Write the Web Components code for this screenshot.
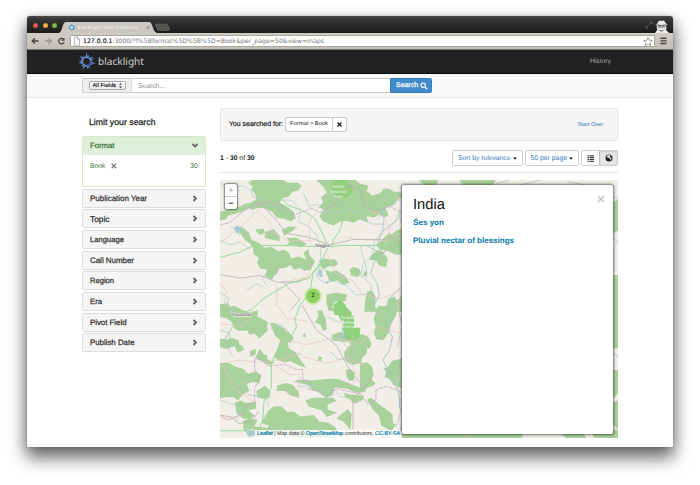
<!DOCTYPE html>
<html lang="en">
<head>
<meta charset="utf-8">
<title>Blacklight Search Results</title>
<style>
html,body{margin:0;height:100%;background:#fff;overflow:hidden}
body{font-family:"Liberation Sans",Arial,sans-serif;font-size:7.4px;color:#333;text-rendering:geometricPrecision}
</style>
</head>
<body>
<browser-window>
  <tab-strip slot="chrome" label="Blacklight Search Results"></tab-strip>
  <address-bar slot="chrome"></address-bar>
  <site-nav></site-nav>
  <search-bar></search-bar>
  <page-columns>
    <facet-list slot="side">
      <facet-panel open label="Format" w="24.5" value="Book" count="30"></facet-panel>
      <facet-panel label="Publication Year" w="57"></facet-panel>
      <facet-panel label="Topic" w="19.5"></facet-panel>
      <facet-panel label="Language" w="34"></facet-panel>
      <facet-panel label="Call Number" w="44"></facet-panel>
      <facet-panel label="Region" w="24"></facet-panel>
      <facet-panel label="Era" w="12"></facet-panel>
      <facet-panel label="Pivot Field" w="36.5"></facet-panel>
      <facet-panel label="Publish Date" w="44.5"></facet-panel>
    </facet-list>
    <applied-params></applied-params>
    <result-tools></result-tools>
    <map-view>
      <result-popup heading="India">
        <fit-text w="31">Śes yon</fit-text>
        <fit-text w="101">Pluvial nectar of blessings</fit-text>
      </result-popup>
    </map-view>
  </page-columns>
</browser-window>
<script>
const define = (name, html, setup) => {
  customElements.define(name, class extends HTMLElement {
    constructor() {
      super();
      this.attachShadow({mode: 'open'}).innerHTML = (typeof html === 'function') ? html(this) : html;
    }
    connectedCallback() { if (setup) setup(this); }
  });
};

define('browser-window', `<style>
:host{display:block;box-sizing:border-box;margin:16px 0 0 27px;width:646px;height:431px;background:#fff;border-radius:3px 3px 1px 1px;
box-shadow:0 0 1px 0 rgba(0,0,0,.65),0 10px 17px 1px rgba(0,0,0,.55),0 3px 14px rgba(0,0,0,.2)}
.in{height:431px;overflow:hidden;border-radius:3px 3px 1px 1px}
</style><div class="in"><slot name="chrome"></slot><slot></slot></div>`);

define('tab-strip', el => `<style>
:host{display:flex;height:17px;background:linear-gradient(#4b4b4b,#353535 20%,#222 80%,#1a1a1a);align-items:flex-end;box-sizing:border-box}
.lights{display:flex;gap:4.4px;padding:0 0 4.8px 6.2px;width:29px;box-sizing:content-box}
i{width:5px;height:5px;border-radius:50%;box-shadow:inset 0 0 1px #0008}
.tab{position:relative;width:99px;height:12px}
.tab svg{display:block}
.t{position:absolute;left:15px;top:2px;font:bold 5.6px/8px "Noto Sans",sans-serif;color:#f4f3f0;text-shadow:0 0 1px #999}
.sp{flex:1}.r{display:block}
</style>
<div class="lights"><i style="background:#e95b54"></i><i style="background:#f4b53d"></i><i style="background:#78c250"></i></div>
<div class="tab"><svg width="112" height="12" viewBox="0 0 112 12" overflow="visible">
<path d="M-3 12C1 10 0 1 4 1H87C91 1 90 10 95 12Z" fill="#cbc8c1"/>
<path d="M94 3h10q1.500 0 2.200 2l1.500 3q.5 1.500-1.500 1.500h-9q-1.500 0-2-1.500l-1.700-4q-.2-1 .5-1Z" fill="#55534f" stroke="#777" stroke-width=".5"/>
<circle cx="9.800" cy="6.500" r="2.100" fill="#e8eef5" stroke="#4e8dd0" stroke-width="1.800" stroke-dasharray="1.500 .4"/>
<path d="M84.500 5l3 3m0-3l-3 3" stroke="#777" stroke-width=".8"/></svg>
<span class="t"><fit-text w="61">${el.getAttribute('label')}</fit-text></span></div>
<div class="sp"></div>
<svg class="r" width="30" height="15" viewBox="0 0 30 15"><path d="M3 10l2.500-2.500M6.500 6.500l2-2M3 8v2h2M7 4h2v2" stroke="#666" fill="none" stroke-width=".8"/>
<path d="M12.500 7l2-1.800L15.500 3q1.500-1 3 0 1.500-1 3 0l1.200 2.200 2 1.300-2 1.500 1 2-1 1.500L26 15H12l2.500-3.500-1-2 .8-1.500Z" fill="#e9e9e9"/><path d="M13.500 6.900q5 1.300 10.500 0M15.200 9.100q2-.8 3.300.2 1.500-1 3.500-.1M16.500 12.300l2 .8 2-.8" fill="none" stroke="#444" stroke-width=".9"/></svg>`);

define('address-bar', `<style>
:host{display:flex;box-sizing:border-box;height:17px;padding:2.500px 4px 2.500px 0;background:linear-gradient(#cfccc6,#c3bfb7);border-bottom:1px solid #77746e;align-items:center}
.nav{width:43px;height:12px;flex:none}
.url{flex:1;height:11.500px;background:#fff;border:.5px solid #aaa69e;border-radius:1px;display:flex;align-items:center;box-sizing:border-box}
.u{font:7px/11px "DejaVu Sans",sans-serif;color:#777;flex:1;padding-left:2px}
b{font-weight:400;color:#111;-webkit-text-stroke:.15px #111}
</style>
<svg class="nav" viewBox="0 0 43 12"><g fill="none" stroke-width="1.300"><path d="M11.500 6H5.500M8 3.300L5.200 6 8 8.700" stroke="#444"/><path d="M18 6h6M21.500 3.300L24.300 6l-2.800 2.700" stroke="#99958d"/><path d="M36.500 4.300A2.700 2.700 0 1 0 37 7.200" stroke="#444"/></g><path d="M37.500 2.500v3.300h-3.300Z" fill="#444"/></svg>
<div class="url"><svg width="10" height="10" viewBox="0 0 10 10"><path d="M3.300 1h3l2.200 2.200V9.300H3.300ZM6.300 1v2.200h2.200" fill="#fff" stroke="#999" stroke-width=".7"/></svg>
<span class="u"><fit-text w="241"><b>127.0.0.1</b>:3000/?f%5Bformat%5D%5B%5D=Book&amp;per_page=50&amp;view=maps</fit-text></span>
<svg width="12" height="11" viewBox="0 0 12 11"><path d="M6 1.300l1.300 2.900 3.100.3-2.300 2.100.7 3.100L6 8.100 3.200 9.700l.7-3.100L1.600 4.500l3.100-.3Z" fill="#fff" stroke="#888" stroke-width=".8"/></svg></div>
<svg width="14" height="12" viewBox="0 0 14 12"><path d="M5.500 3.300h6M5.500 5.900h6M5.500 8.500h6" stroke="#444" stroke-width="1.400"/></svg>`);

define('site-nav', () => {
  let rays = '';
  for (let i = 0; i < 14; i++) {
    const tip = [0, 2.4, 1, 1.8][i % 4], a = i * 360 / 14;
    rays += `<path transform="rotate(${a.toFixed(1)} 9.500 9.500)" d="M8.100 5.600L${i % 2 ? 8.300 : 9.900} ${tip} 10.300 5.600Z"/>`;
  }
  return `<style>
:host{display:flex;box-sizing:border-box;height:24px;background:#222;border-bottom:1px solid #080808;padding:0 62px 0 50px;align-items:center;color:#a8a8a8}
svg{margin:1px 2px 0 0;flex:none}
.brand{font:10.500px/22px "Noto Sans",sans-serif;color:#d0d0d0;flex:1;margin-top:-1px}
</style><svg width="19" height="20" viewBox="0 0 19 20"><g fill="#668fdc">${rays}</g><circle cx="9.500" cy="9.500" r="4.100" fill="none" stroke="#668fdc" stroke-width="1.300"/><path d="M10 13.300q3.600-.5 3.600-4.200" fill="none" stroke="#35518c" stroke-width="1.500"/></svg>
<span class="brand"><fit-text w="46">blacklight</fit-text></span><fit-text w="21">History</fit-text>`;
});

define('search-bar', `<style>
:host{display:flex;box-sizing:border-box;height:24px;background:#f8f8f8;border-bottom:1px solid #e7e7e7;padding:4px 0 4px 55px}
.add{width:50px;box-sizing:border-box;background:#eee;border:1px solid #ccc;border-right-color:#ddd;border-radius:2px 0 0 2px;display:flex;align-items:center;justify-content:center}
.sel{width:37px;height:9px;box-sizing:border-box;border:.7px solid #aaa;border-radius:2px;background:linear-gradient(#fff,#eee);font-size:6px;line-height:8px;color:#111;display:flex;align-items:center;justify-content:space-between;padding:0 3px}
.in{width:258px;box-sizing:border-box;background:#fff;border:solid #ccc;border-width:1px 0;line-height:13px;padding-left:6px;color:#888}
.btn{width:42px;background:#428bca;border:1px solid #357ebd;box-sizing:border-box;border-radius:0 2px 2px 0;color:#fff;display:flex;align-items:center;padding-left:5px;gap:2px}
</style><div class="add"><div class="sel"><fit-text w="23.500" style="-webkit-text-stroke:.15px #111">All Fields</fit-text><svg width="3" height="7" viewBox="0 0 3 7"><path d="M0 2.800L1.500 .7 3 2.800ZM0 4.200h3L1.500 6.300Z" fill="#444"/></svg></div></div>
<div class="in"><fit-text w="27">Search...</fit-text></div>
<div class="btn"><fit-text w="22" style="-webkit-text-stroke:.25px #fff">Search</fit-text><svg width="8" height="8" viewBox="0 0 8 8"><circle cx="3.200" cy="3.200" r="2.200" fill="none" stroke="#fff" stroke-width="1.100"/><path d="M4.900 4.900L7 7" stroke="#fff" stroke-width="1.400"/></svg></div>`);

define('page-columns', `<style>
:host{display:flex;padding:10px 55px 0;gap:14px}
.side{width:124px;flex:none}.main{width:398px;flex:none}
</style><div class="side"><slot name="side"></slot></div><div class="main"><slot></slot></div>`);

define('facet-list', `<style>
:host{display:flex;flex-direction:column;gap:1.700px}
.h{font-size:8.900px;line-height:12px;height:12px;padding:8px 0 6.300px 7px;color:#222;-webkit-text-stroke:.25px #222}
</style><div class="h"><fit-text w="66.500">Limit your search</fit-text></div><slot></slot>`);

define('facet-panel', el => {
  const open = el.hasAttribute('open'), c = open ? '#3c763d' : '#333';
  return `<style>
:host{display:block;box-sizing:border-box;border:1px solid ${open ? '#d6e9c6' : '#ddd'};border-radius:2px;background:#fff;height:${open ? 51 : 19}px}
.h{display:flex;align-items:center;justify-content:space-between;background:${open ? '#dff0d8' : '#f5f5f5'};height:${open ? 18 : 17}px;padding:0 7px;color:${c};font-size:7.600px;-webkit-text-stroke:.25px ${c}}
.b{display:flex;padding:7px 7px 0;line-height:9px;color:#3c763d;align-items:center}
.b svg{margin-left:5px;flex:none}.n{margin-left:auto}
</style><div class="h"><fit-text w="${el.getAttribute('w')}">${el.getAttribute('label')}</fit-text>
<svg width="6" height="7" viewBox="0 0 6 7"><path d="${open ? 'M.5 2L3 4.500 5.500 2' : 'M1.500 1L4 3.500 1.500 6'}" fill="none" stroke="#666" stroke-width="1.800"/></svg></div>
${open ? `<div class="b"><fit-text w="15.500">${el.getAttribute('value')}</fit-text><svg width="6" height="6" viewBox="0 0 6 6"><path d="M.6.6l4.600 4.600m0-4.600L.6 5.200" stroke="#777" stroke-width="1.300"/></svg><fit-text class="n" w="8">${el.getAttribute('count')}</fit-text></div>` : ''}`;
});

define('applied-params', `<style>
:host{display:flex;box-sizing:border-box;height:33px;border:1px solid #e6e6e6;border-radius:2px;background:#f5f5f5;align-items:center;padding:0 14px 0 8px;color:#222}
.k{-webkit-text-stroke:.2px #222;font-size:6.900px}
.c{display:flex;height:12.500px;border:1px solid #ccc;border-radius:2px;background:#fff;margin-left:2px;line-height:12.500px;font-size:6px}
.c span{padding:0 4px}.x{width:13px;border-left:1px solid #ccc;display:flex;align-items:center;justify-content:center}
.s{margin-left:auto;color:#337ab7;font-size:5.800px}
</style><fit-text class="k" w="54">You searched for:</fit-text><div class="c"><span><fit-text w="38">Format &gt; Book</fit-text></span><div class="x"><svg width="5" height="5" viewBox="0 0 5 5"><path d="M.5.5l4 4m0-4l-4 4" stroke="#222" stroke-width="1.400"/></svg></div></div><fit-text class="s" w="25.500">Start Over</fit-text>`);

define('result-tools', `<style>
:host{display:flex;box-sizing:border-box;height:32px;margin-bottom:6.500px;border-bottom:1px solid #e5e5e5;align-items:flex-start;padding-top:9px;gap:2.500px;color:#222}
.n{flex:1;line-height:16px}
.b{box-sizing:border-box;height:16px;border:1px solid #ccc;border-radius:2px;color:#337ab7;display:flex;align-items:center;justify-content:center;gap:2px}
.g{display:flex;width:37px;height:16px;border:1px solid #ccc;border-radius:2px;box-sizing:border-box}
.g div{flex:1;display:flex;align-items:center;justify-content:center}.g .a{background:#e6e6e6;border-left:1px solid #bbb;box-shadow:inset 0 1px 2px #0002}
</style><div class="n"><fit-text w="34.500"><b>1</b> - <b>30</b> of <b>30</b></fit-text></div>
<div class="b" style="width:70.500px"><fit-text w="52.500">Sort by relevance</fit-text><svg width="4" height="3" viewBox="0 0 4 3"><path d="M0 .5h4L2 2.700Z" fill="#222"/></svg></div>
<div class="b" style="width:53.500px"><fit-text w="36.500">50 per page</fit-text><svg width="4" height="3" viewBox="0 0 4 3"><path d="M0 .5h4L2 2.700Z" fill="#222"/></svg></div>
<div class="g"><div><svg width="8" height="7" viewBox="0 0 8 7"><path d="M.5 .9h1.500M.5 2.700h1.500M.5 4.500h1.500M.5 6.300h1.500M2.500 .9H7M2.500 2.700H7M2.500 4.500H7M2.500 6.300H7" stroke="#444" stroke-width="1.200"/></svg></div><div class="a"><svg width="8" height="8" viewBox="0 0 8 8"><circle cx="4" cy="4" r="3.500" fill="#222"/><path d="M3.900 1.100l1.800.5-1 1.200.9 1 .9-.3-.4 2.200-1.200-.5-.5-1.200-1.800-.4-1.100-1 .7-.9Z" fill="#e6e6e6"/></svg></div></div>`);

/* Map canvas: 3 units per pixel. */
define('map-view', `<style>
:host{display:block;position:relative;height:258.500px;background:#f1eee8;overflow:hidden}
.m{display:block}
.z{position:absolute;left:5px;top:4.500px;width:12px;height:25px;background:#fff;border-radius:2px;box-shadow:0 0 1.500px 1px #0007;display:grid;grid-template-rows:1fr 1fr;text-align:center;font:bold 8.500px/12px "Liberation Sans",sans-serif;color:#222}
.z span:first-child{color:#bbb;border-bottom:.7px solid #ccc}
.a{position:absolute;left:35px;bottom:0;height:8px;background:#fffc;padding:0 2px;font-size:6.300px;line-height:8.500px;color:#333;white-space:nowrap}
.a em{font-style:normal;color:#0078a8;-webkit-text-stroke:.15px #0078a8}
.c{position:absolute;left:84px;top:107.500px;width:18px;height:18px;border-radius:50%;background:#b5e28c99;display:grid;place-items:center}
.c span{width:14px;height:14px;border-radius:50%;background:#7bcb45cc;text-align:center;font-size:6px;line-height:14px;color:#222}
</style>
<svg class="m" width="398" height="258.500" viewBox="0 0 1194 775">
<g fill="#a9d19b">
<g transform="translate(-15,-13)">
<path d="M15 108l20-5 18-10 20 0 16-9 18-3 18-10-5-18-12-10 6-10-10-8 4-12h98l12 8 30 0 12 9-10 14-18 4-12 16-18 3-8 14 18 8 24 20 6 18-14 10-20-8-24-4-12-16-26-12-20 0-14 6-10-6-18 10-24 8-20 4-8 12-12 2-22 8-14 0Z"/>
<path d="M303 13h120l10 10 28 6-6 16 16 14 24-6 10-14 18 0 16 10 12-2 18 12-20 12-12 16-26 10 10 20-12 8-18-8-14 8-22-4 4 20-24-10-22 10-18-6-22 4-18 10-30-12-12-16 14-20-16-6 14-16-8-14 18-14-10-18Z"/>
<path d="M345 22l14-9h36l6 12 14 8-6 22-16 12-28-4-14-16Z" fill="#93d07e"/>
<path d="M68 160l12-6 22 16 8 22 22 10 16 14 22-2 18 12 20-4 14 10 6 16 24-6 22 10-8-22 14-10 4 20 16 16-12 26-20 4-12-10-18 6-12-14-14 8-20 2-6 16-10 6-4 12-22-10 6-20-20-4-10-18 6-14-16-10-2-20-10-14-12-6-14-20Z"/>
<path d="M120 162l26-4 4 14-16 6ZM152 168l24-8 18 20 0 16-22-4-24-6ZM200 162l22-10 24 2-14 12-24 14ZM214 186l30 0 20 12 12 6-16 10-28-6-22 4 14-14Z"/>
<path d="M560 158l-16 6-14 12-8-4-24 22-12 14 10 14 24 4 20 10 20 2ZM484 226l16-2 18 24-4 26-20-4-12-16-20-2 8-14ZM404 282l10-8 18 4 6 16-10 10-20-4ZM448 286l10 4-4 14-8-4ZM312 254l16-6 20 4 10-2 12 14-12 8-20 0-14 10-8-14ZM330 282l18 6 16-4 26 16 14 20-18 8-18-14-24 4Z"/>
<path d="M334 356l30-6 32 6-4 20-32 2-8 16 14 14-26-4-6-26ZM456 348l14-4 12 18-2 30 14 16-46 0 2-30ZM520 368l18-6 8 12 14-10v44h-50ZM15 386l24-4 8 16 16 6 20 0 24 8v16l-92-6Z"/>
<path d="M356 386l22-14 14 16 0 30-34 0Z" fill="#8fd07c"/>
</g>
<g transform="translate(-15,377)">
<path d="M15 0l22 6 20-6 16 8 26 12 30-6-2 18 20 10 12 8-4 14 4 10-14 12-12 12-14-14-16 2-6-12-24 2-14-8-8-18-14-12-20-4ZM15 98l20 4 16-6 20 8 4 20-20-2-20 8-20-6ZM60 124l20-6 8 14-20 8ZM164 52l16 0 24 14 20 16 12 14-8 14-20 4-16-14-12-10-8-20ZM196 100l22 10 4 18 18 10 16 24 18 24-26-8-20-12-22 4-22-10-8-10 12-18ZM134 128l14 20 10 0-2 12 24 12-20 4-22-10-16-10ZM104 136l18-6 0 16-16 8Z"/>
<path d="M308 14l14 0 10 26 4 30-12 6-8-20-16-6 10-16ZM490 0l54 4 0 24-16 28-6 24-18 24-20-4-8-18 6-20-6-22ZM350 88l26-10 20 12 32 4 12-10 20 10 10 20-6 14-30-8-12 8-14-8-4-12-20 0-34-4ZM388 138l14-18 30-2 24 8 0 16-14 14-4 16-26 6-18-10-6-12ZM436 172l20-2 16 14 4 22-6 14 12 14-12 8-14 4-8 14-16-8 4-20-2-28ZM506 188l14-6 10-16 30-8v90l-24-10-14-22-14-2 6-14ZM394 192l12-2 14 12-4 22-14 0-8-12ZM312 150l10 6-6 12-8-6ZM264 88l6-6 2 12-6 2Z"/>
<path d="M15 172l28 0 16 10 26 8 14 14 22-6 18 10-6 26-16-6-22 6 8 22-20 10-14 18-14-10-22 0-22 4ZM124 256l26-16 16 16-2 20-18 4-20-6ZM186 240l26-8 22 6 18 22 0 16-24-6-18-14-26 0ZM236 228l14-6 40 2 44-4 36 0 26 10 30 12 14 10 4 8-24 0-20-10-28-4-14 0-4 22-20 8-22-16-28-12 4-8-24-6ZM272 284l22-8 60 0 10 10-26 10 0 16 28 8-30 14-16-20-40-12ZM386 262l20 4 40 4-4 14-26 10-10-12-14-6Z"/>
<path d="M456 282l12-6 30 24 26 18 8 8 2 26 10 6-16 18-30-18-6-28-18-18ZM398 310l12 14-4 48-20-24-22-10 14-12ZM160 314l16-12 24 0 16 16 20 0 20 14 40-4 18 20 26 2 24 18 0 30-120 0-18-10-34-8-30 8-14-10 14-18-24-8 6-10ZM60 290l18-6 14 8 30-4 2 20-24 6 20 16-14 10-22-2-20-16ZM84 346l20-8 24 4-10 20 36 4 20 18-28 4-30-18-30 4Z"/>
<path d="M358 0h32l20 20-2 20-30 6-8-18-14-10Z" fill="#8fd07c"/><path d="M390 30l26 0 2 36 18 0-2 28-20 12-24-8-8-30Z" fill="#8fd07c"/>
</g>
<path d="M595 0h60l-8 18h-30ZM718 0h110l-20 30h-70ZM545 175h40v100h-40ZM1150 74l44-14v92l-44 20ZM1150 285h44v220h-44ZM1150 570h44v70l-20 20-24 20ZM1160 680l34-20v90l-18-22-16 12ZM545 745h370l-10 30H545ZM1000 745h80l20 30h-60ZM1110 750h84v25h-70Z"/>
</g>
<g fill="none" stroke-linejoin="round" stroke-width="2">
<g stroke="#a4cbcb">
<path d="M0 10l40 12 30-6 20 14 10 22 30 6 12 22 36 2M175 60l40 0 25 28-4 38 30 12 24 28 12 40 0 50-14 34M250 38l18 40 26-6 18 20 60 6 14-10 34 14 36 30 40 0M470 120l20-20-10-28 20-30M476 95l16 18-4 40-26 36-4 36-24 18 6 30-18 20M0 180l30 14 30-8 30 22M30 140l20 6 10 20M150 265l-24 30 14 22M80 330l30-18 20 8M0 335l26 20-6 26 36 20 4 40M300 268l-8 24 20 16 26-6 40 14 28 28 40 0M420 194l12 50-10 40 30 28 6 60M320 410l50 22-10 40 20 30M150 450l26-20 24 18M0 450l30 10-6 40 14 30M190 525l32-10 20 10M330 515l26 24 34-4 16-20M240 620l50-6 14 14 40 0 16 22 18 0M70 625l18 20 50 6 8 30M0 660l60 20-10 40"/>
<path d="M540 90l-14 34-40 30-14 40 12 28-22 26-10 32 20 30 6 36-16 30M545 320l-30 26-12 30 8 40-6 34 12 20-8 40-20 30 14 30-4 20 26 18 12 34 2 40 12 30-10 40" stroke-width="3"/>
</g>
<g stroke="#edc1bf">
<path d="M0 190l60-48 60-56M110 88l40 40 4 26 50 28 70 0M270 190l-4-60 20-30M370 168l40 10 80 4 55-20M450 92l36 14 24 40-10 40M0 310l20 22-8 40 40 40M545 330l-60 26-60-16-26-38-50-20-30-64M170 315l0 60 30 40 60 8M180 310l80-20 20-40M0 430l70 10 24-30M0 550l60-10 50 6 60-4 70-20 10-20M250 530l70 20 60-18 60 28M10 560l36 60 40-20M200 480l60 14 80-20 60 10M400 464l-20 60 36 70-30 30M240 590l-6 60M410 500l60-60 74 20M30 620l80 50M0 710l30 8 40-14M540 112l-60 60M170 560l40 24 30-2"/></g>
<g stroke="#b9b3b1" stroke-width="2.500">
<path d="M0 284l60 10 60-8 50 20 60 0 40-14M190 308l50 50M246 375l44 75 60 46 20 40 30 50 24 26M110 60l50 50 40 50 60 10 70 24 70-16 100 0 90-26M545 180l-60 40-50-26M240 358l-30 34M0 705l36 6 20 20 40-8 20-30M455 598l-30 30-26 30 0 90"/></g>
<g stroke="#98da98" stroke-width="3">
<path d="M0 232l60-16 40-20 90 0 120 4 60-4 80 0 95 0M84 5l30 30 66 16 24 24 50 20 30 20 26 50 14 36-26 56-20 26-8 56-30 36-16 44 6 20-16 30-40 34-20 50 0 70-22 40-4 60-34 80M334 204l6-24 20-30 20-70 40-56M206 310l-76 46-32 30-40 20-36 60-22 30M205 310l60-16 40-50M0 752h120"/></g>
<g stroke="#c7a2c7" stroke-width="2.500" stroke-dasharray="9 2 3 2"><path d="M0 135l30-8 40-34 30-18 50-10 40 18 36 20 30-10 14-10 30 14 40-20 32-48 20-14 26 10 16 50 34 20 40-16 30 14 24-6M104 535l20 4 20 18 50-4 30 14 24 2 0 30 20 4-2 26 32 4 20 20 14-20 24-6 34 8 34 8 18 28 26-12 0-30 30-10 40 12 20 30M104 538l0 30 14 20-14 40 0 40-28 12-8 20-44 20-24-16"/></g>
</g>
<g stroke="#d0cac7" fill="none" stroke-width="3"><path d="M530 50l20 28-12 30 14 40M545 340l-12 40 14 60-16 60M545 560l-16 60 18 60-18 60M830 10l40-10M900 15l60-15M1040 4l60 12 94 40M760 752l-30 23M1156 140l38 50M1156 510l38 18"/></g>
<g fill="#a8cad0"><path d="M42 146l8-10 12 6 0 14-12 4ZM296 268l10 2 2 22-12-4ZM360 460l12 0-2 12-12 4ZM74 752l30 0 8 12-24 6ZM316 302l10 4-4 8Z"/></g>
<g font-family="Liberation Sans" text-anchor="middle"><g fill="#eef8ea" font-size="13"><text x="354" y="25">Pench</text><text x="354" y="39">National</text><text x="354" y="53">Park</text><text x="383" y="418">Tadoba</text><text x="383" y="431">Andhari</text><text x="383" y="444">Reserve</text></g>
<g fill="#333" font-size="14" stroke="#f8f5f0" stroke-width="3" paint-order="stroke"><text x="309" y="202">Nagpur</text><text x="65" y="409">Yavatmal</text></g></g>
</svg>
<div class="z"><span>+</span><span>−</span></div>
<div class="c"><span>2</span></div>
<div class="a"><fit-text w="143"><em>Leaflet</em> | Map data © <em>OpenStreetMap</em> contributors, <em>CC-BY-SA</em></fit-text></div>
<slot></slot>`);

define('result-popup', el => `<style>
:host{position:absolute;left:182px;top:5px;width:211px;height:249px;box-sizing:border-box;background:#fff;border-radius:2px;box-shadow:0 0 2.500px 1px rgba(0,0,0,.55);padding:12px 11px;display:flex;flex-direction:column;align-items:flex-start;color:#0078a8;font-weight:bold;font-size:7.800px;line-height:10px;gap:8px}
header{display:flex;justify-content:space-between;width:100%;height:13px;color:#111;font-weight:400;font-size:14px;line-height:17px}
svg{margin:-1.500px -2.500px 0 0}
</style><header><fit-text w="32">${el.getAttribute('heading')}</fit-text><svg width="8" height="8" viewBox="0 0 8 8"><path d="M1 1l6 6m0-6L1 7" stroke="#c4c4c4" stroke-width="1.700"/></svg></header><slot></slot>`);

/* Text run scaled to occupy the given width; registered last so that it
   measures with the inherited styles of its surrounding component. */
define('fit-text', `<style>:host{display:inline-block;white-space:nowrap}</style><slot></slot>`, el => {
  const target = parseFloat(el.getAttribute('w'));
  const width = el.getBoundingClientRect().width;
  if (!width) return;
  const size = parseFloat(getComputedStyle(el).fontSize);
  el.style.fontSize = (size * Math.min(1.12, Math.max(.88, target / width))).toFixed(3) + 'px';
  const rest = target - el.getBoundingClientRect().width;
  el.style.letterSpacing = (rest / el.textContent.length).toFixed(4) + 'px';
});
</script>
</body>
</html>
